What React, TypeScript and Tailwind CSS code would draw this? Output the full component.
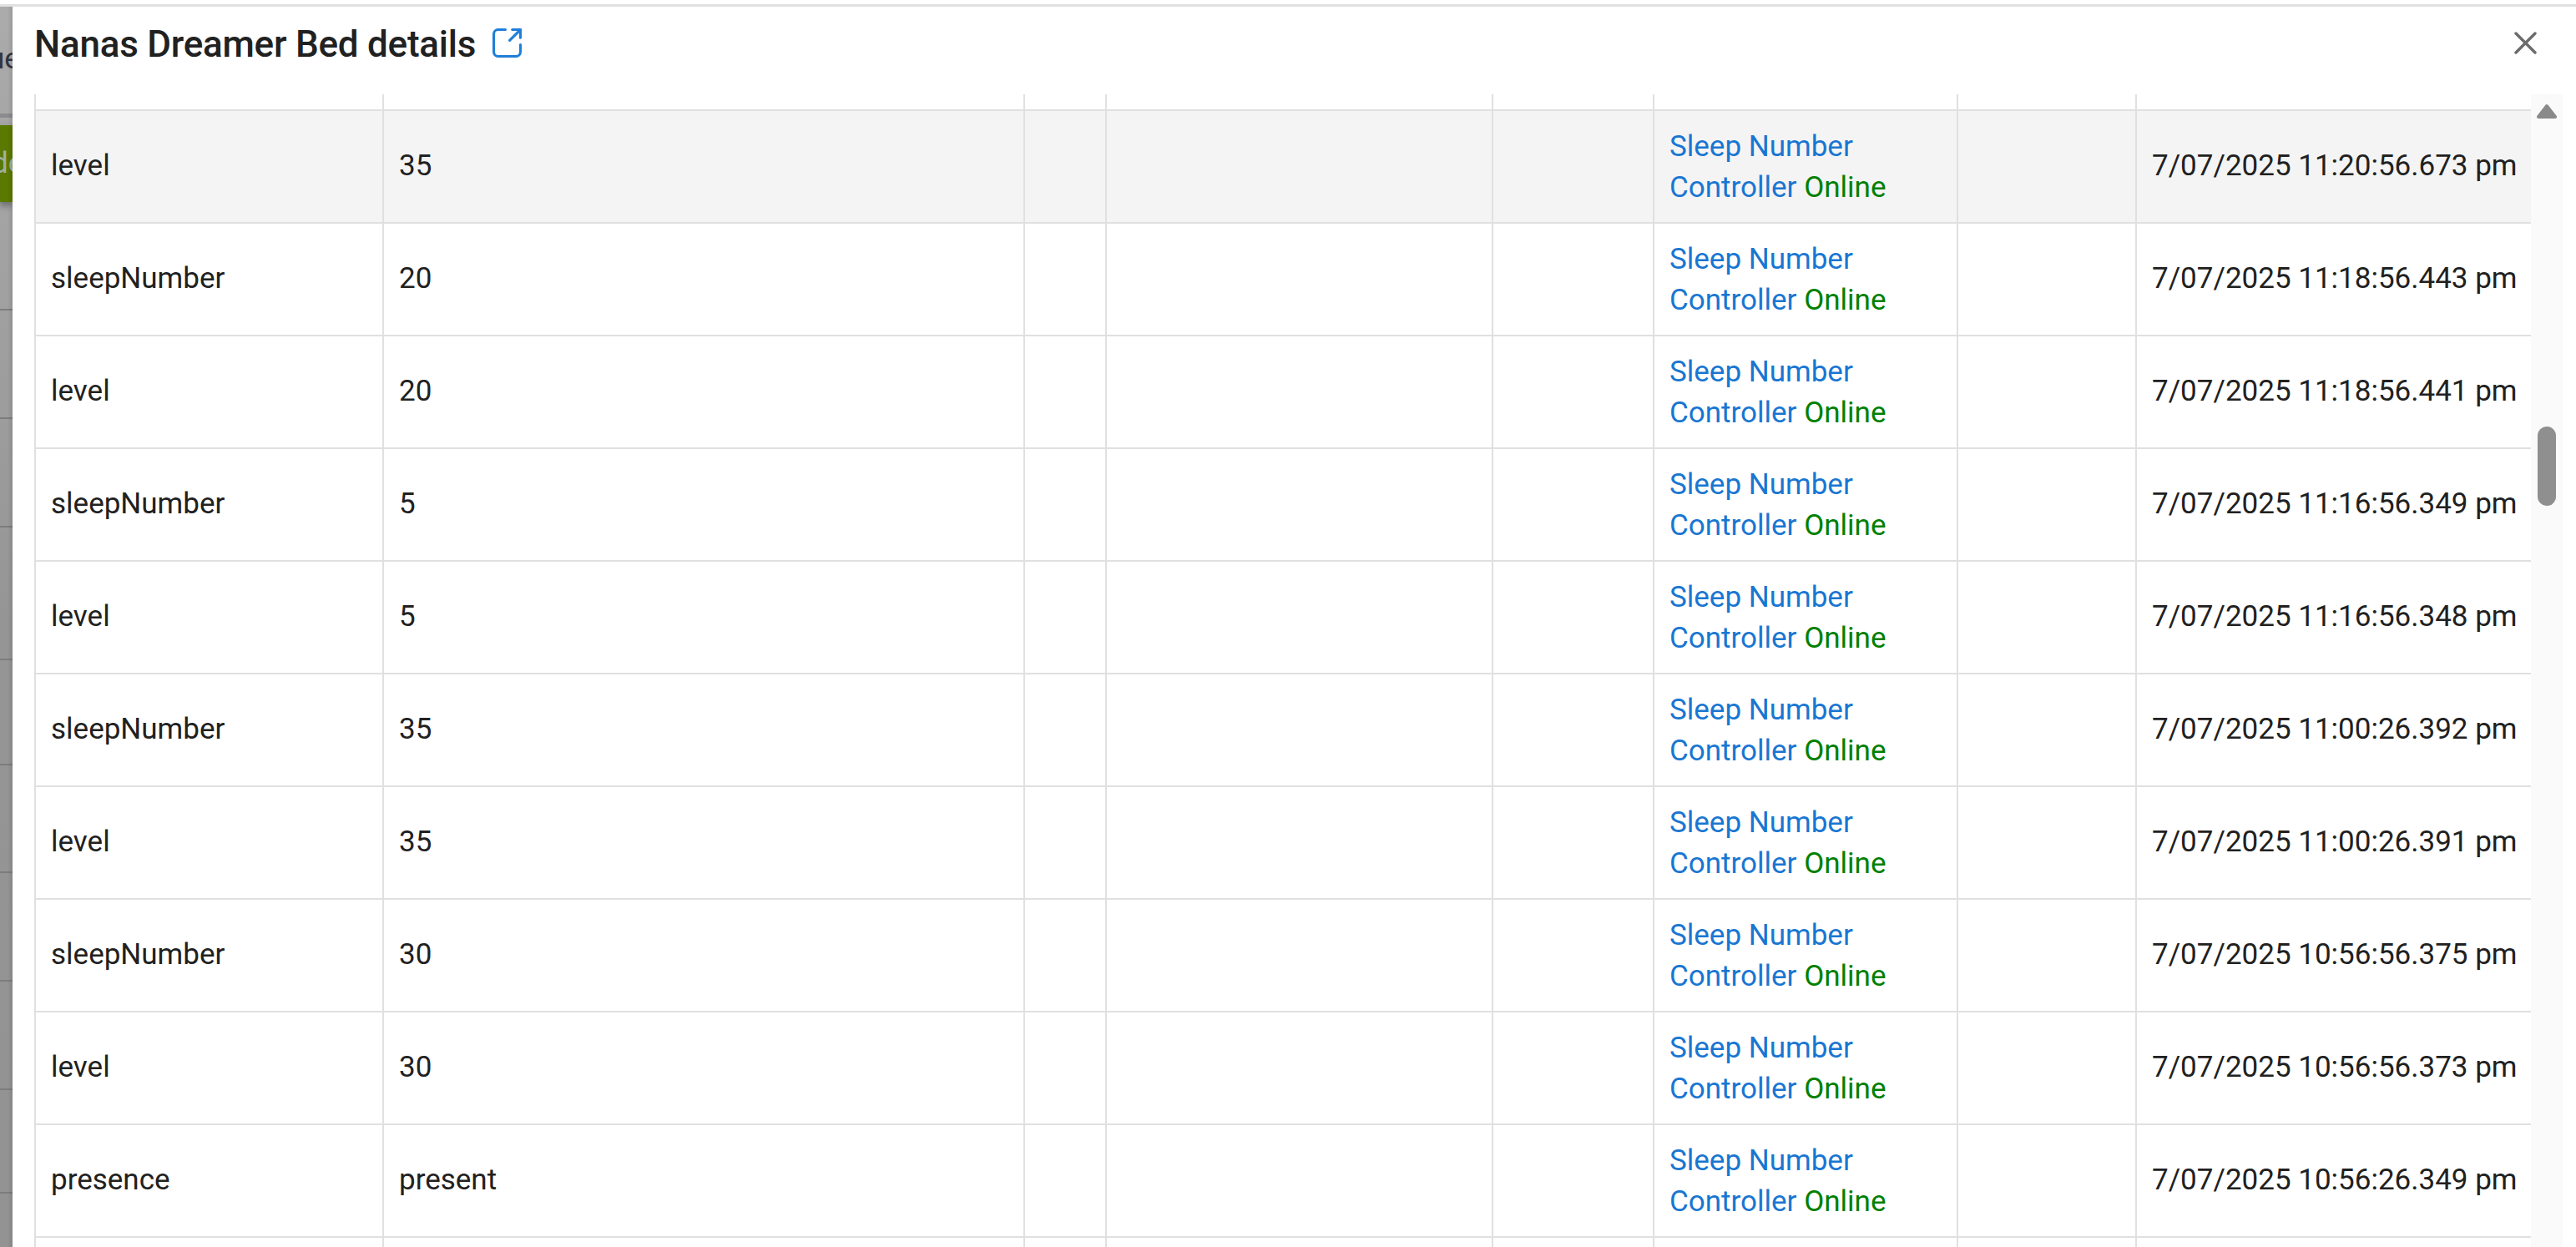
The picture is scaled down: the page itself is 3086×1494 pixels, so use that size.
const colWidths = 'grid-cols-[417px_768px_98px_463px_193px_364px_214px_474px]';

const rows = [
  { name: 'level', value: '35', time: '7/07/2025 11:20:56.673 pm', active: true },
  { name: 'sleepNumber', value: '20', time: '7/07/2025 11:18:56.443 pm' },
  { name: 'level', value: '20', time: '7/07/2025 11:18:56.441 pm' },
  { name: 'sleepNumber', value: '5', time: '7/07/2025 11:16:56.349 pm' },
  { name: 'level', value: '5', time: '7/07/2025 11:16:56.348 pm' },
  { name: 'sleepNumber', value: '35', time: '7/07/2025 11:00:26.392 pm' },
  { name: 'level', value: '35', time: '7/07/2025 11:00:26.391 pm' },
  { name: 'sleepNumber', value: '30', time: '7/07/2025 10:56:56.375 pm' },
  { name: 'level', value: '30', time: '7/07/2025 10:56:56.373 pm' },
  { name: 'presence', value: 'present', time: '7/07/2025 10:56:26.349 pm' },
];

const cell = 'border-l-2 border-[#e0e0e0] px-[18px] flex items-center whitespace-nowrap';

function Row({ name, value, time, active }: { name: string; value: string; time: string; active?: boolean }) {
  return (
    <div className={`grid ${colWidths} h-[135px] border-b-2 border-[#e0e0e0] ${active ? 'bg-[#f4f4f4]' : ''}`}>
      <div className={cell}>{name}</div>
      <div className={cell}>{value}</div>
      <div className={cell} />
      <div className={cell} />
      <div className={cell} />
      <div className={`${cell} !whitespace-normal`}>
        <div className="leading-[49px] text-[#1976d2]">
          Sleep Number Controller <span className="text-[#008000]">Online</span>
        </div>
      </div>
      <div className={cell} />
      <div className={cell}>{time}</div>
    </div>
  );
}

function SpacerRow({ height, bordered }: { height: string; bordered?: boolean }) {
  return (
    <div className={`grid ${colWidths} ${height} ${bordered ? 'border-b-2 border-[#e0e0e0]' : ''}`}>
      {Array.from({ length: 8 }).map((_, i) => (
        <div key={i} className="border-l-2 border-[#e0e0e0]" />
      ))}
    </div>
  );
}

// what shows of the page behind the dialog
function Backdrop() {
  return (
    <div className="relative w-[15px] shrink-0 overflow-hidden bg-gradient-to-b from-[#ababab] via-[#959595] to-[#939393] flex flex-col">
      <div className="absolute inset-y-0 right-0 w-[6px] bg-gradient-to-r from-transparent to-black/10" />
      <div className="h-[128px] pt-[40px] text-[#2f3540] text-[35px] leading-[46px] whitespace-nowrap">
        <span className="block -ml-[14px]">ue</span>
      </div>
      <div className="h-[5px] bg-[#8b8b90]" />
      <div className="h-[9px]" />
      <div className="h-[92px] bg-[#5a7900] shadow-[0_4px_8px_rgba(0,0,0,0.4)] text-[#9fb0a4] text-[35px] leading-[92px] whitespace-nowrap overflow-hidden">
        <span className="block -ml-[10px]">de</span>
      </div>
      <div className="h-[128px] shrink-0" />
      <div className="h-[2px] bg-[#7d7d7d] mb-[128px]" />
      <div className="h-[2px] bg-[#7d7d7d] mb-[128px]" />
      <div className="h-[2px] bg-[#7d7d7d] mb-[157px]" />
      <div className="h-[2px] bg-[#7d7d7d] mb-[124px]" />
      <div className="h-[2px] bg-[#7d7d7d] mb-[127px]" />
      <div className="h-[2px] bg-[#7d7d7d] mb-[128px]" />
      <div className="h-[2px] bg-[#7d7d7d] mb-[128px]" />
      <div className="h-[2px] bg-[#7d7d7d] mb-[122px]" />
      <div className="h-[2px] bg-[#7d7d7d]" />
    </div>
  );
}

export default function App() {
  return (
    <div className="w-[3086px] h-[1494px] overflow-hidden bg-white flex flex-col font-['Roboto',sans-serif] text-[#212121] text-[35px]">
      <div className="h-[5px] shrink-0" />
      <div className="h-[3px] shrink-0 bg-[#e0e0e0]" />
      <div className="flex flex-1 min-h-0">
        <Backdrop />
        <div className="flex-1 min-w-0 flex flex-col">
          <div className="h-[105px] shrink-0 relative flex items-start pl-[26px] pt-[19px]">
            <h2 className="text-[44px] leading-[53px] font-medium tracking-[-0.24px]">Nanas Dreamer Bed details</h2>
            <svg viewBox="0 0 34 34" className="absolute left-[575px] top-[26px] w-[35px] h-[35px] text-[#1e7fd8]" fill="none" stroke="currentColor" strokeWidth="3" strokeLinecap="round" strokeLinejoin="round">
              <path d="M15 1.5H6.5a5 5 0 0 0-5 5v21a5 5 0 0 0 5 5h21a5 5 0 0 0 5-5V19" />
              <path d="M32.5 1.5 20 14" />
              <path d="M23 1.5h9.5V11" />
            </svg>
            <svg viewBox="0 0 27 27" className="absolute left-[2997px] top-[30px] w-[27px] h-[27px] text-[#6b6b6b]" fill="none" stroke="currentColor" strokeWidth="3.4" strokeLinecap="round">
              <path d="M2 2l23 23M25 2 2 25" />
            </svg>
          </div>
          <div className="flex-1 min-h-0 flex pl-[26px] pr-[16px]">
            <div className="flex-1 min-w-0 overflow-hidden">
              <SpacerRow height="h-[20px]" bordered />
              {rows.map((r, i) => (
                <Row key={i} {...r} />
              ))}
              <SpacerRow height="h-[20px]" />
            </div>
            <div className="relative w-[38px] shrink-0 bg-[#fafafa]">
              <svg viewBox="0 0 24 18" className="absolute left-[7px] top-[11px] w-[24px] h-[18px] text-[#8a8a8a]" fill="currentColor" stroke="currentColor" strokeWidth="4" strokeLinejoin="round">
                <path d="M12 3 22 16H2z" />
              </svg>
              <div className="absolute left-[8px] top-[398px] w-[22px] h-[95px] rounded-full bg-[#8f8f8f]" />
            </div>
          </div>
        </div>
      </div>
    </div>
  );
}
